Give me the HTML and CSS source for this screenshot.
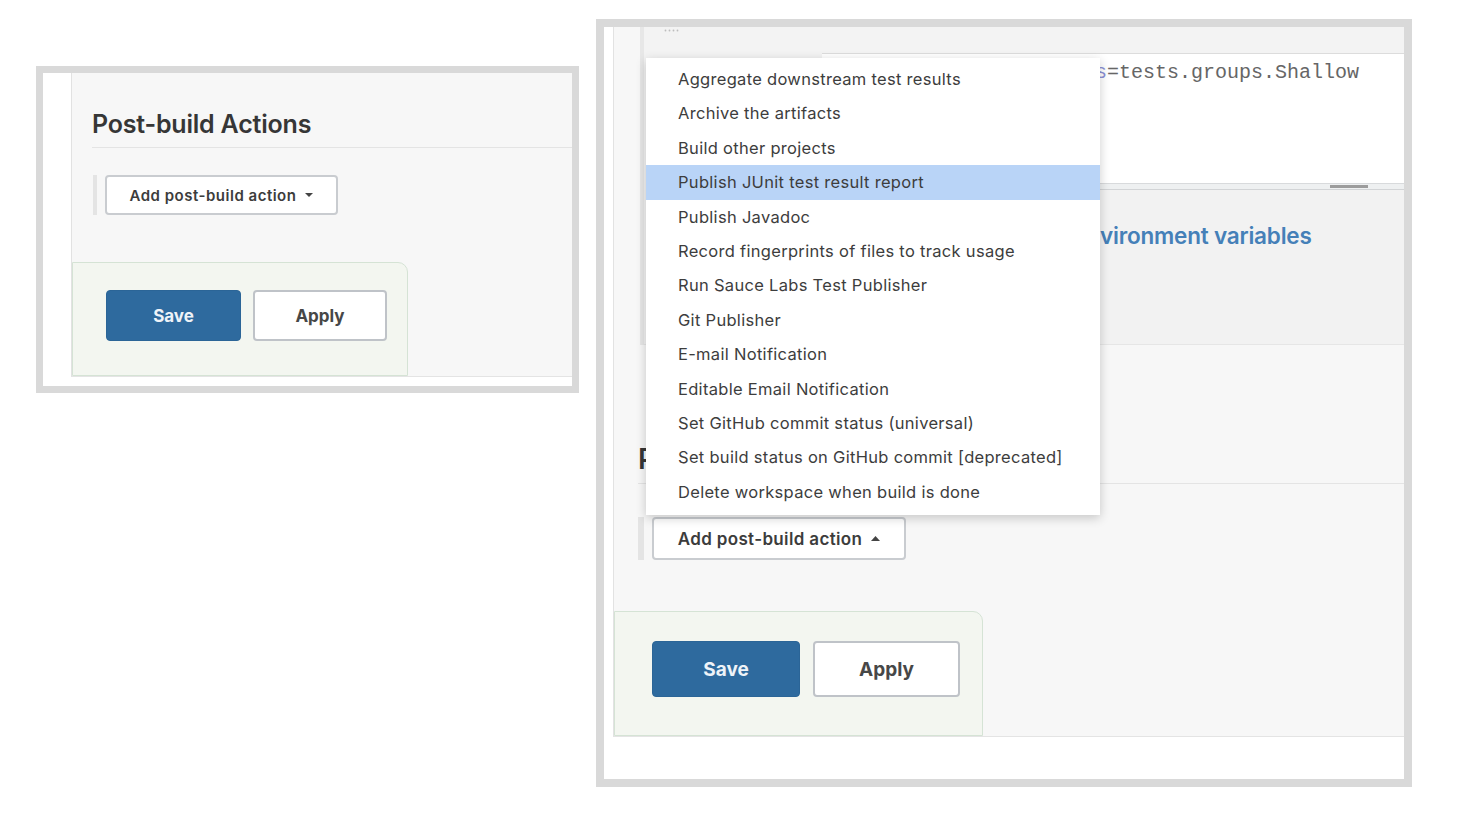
FILE: index.html
```html
<!DOCTYPE html>
<html lang="en">
<head>
<meta charset="utf-8">
<title>Post-build Actions</title>
<link rel="stylesheet" href="styles.css">
</head>
<body>
<div class="stage">
  <section class="shot shot-left">
    <div class="gutter"></div>
    <div class="config config-sm">
      <h2 class="section-title">Post-build Actions</h2>
      <div class="add-row">
        <span class="add-bar"></span>
        <button class="add-btn">Add post-build action <svg class="caret" width="8" height="4" viewBox="0 0 8 4"><path d="M0 0h8L4 4z"/></svg></button>
      </div>
      <div class="sticker">
        <button class="btn btn-save">Save</button>
        <button class="btn btn-apply">Apply</button>
      </div>
    </div>
  </section>

  <section class="shot shot-right">
    <div class="gutter"></div>
    <div class="config config-lg">
      <div class="nested">
        <div class="handle-row"><svg class="dots" width="16" height="3" viewBox="0 0 16 3"><circle cx="1.5" cy="1.5" r="0.9"/><circle cx="5.5" cy="1.5" r="0.9"/><circle cx="9.5" cy="1.5" r="0.9"/><circle cx="13.5" cy="1.5" r="0.9"/></svg></div>
        <div class="textarea"><span class="code">-Dgroup<span class="sel">s</span>=tests.groups.Shallow</span></div>
        <div class="resize-bar"><span class="grip"></span></div>
        <div class="env-row"><span class="env-link">vironment variables</span></div>
      </div>
      <h2 class="section-title">Post-build Actions</h2>
      <div class="add-row">
        <span class="add-bar"></span>
        <button class="add-btn">Add post-build action <svg class="caret" width="9" height="5" viewBox="0 0 9 5"><path d="M0 5h9L4.5 0z"/></svg></button>
      </div>
      <div class="sticker">
        <button class="btn btn-save">Save</button>
        <button class="btn btn-apply">Apply</button>
      </div>
    </div>
    <ul class="menu">
      <li>Aggregate downstream test results</li>
      <li>Archive the artifacts</li>
      <li>Build other projects</li>
      <li class="active">Publish JUnit test result report</li>
      <li>Publish Javadoc</li>
      <li>Record fingerprints of files to track usage</li>
      <li>Run Sauce Labs Test Publisher</li>
      <li>Git Publisher</li>
      <li>E-mail Notification</li>
      <li>Editable Email Notification</li>
      <li>Set GitHub commit status (universal)</li>
      <li>Set build status on GitHub commit [deprecated]</li>
      <li>Delete workspace when build is done</li>
    </ul>
  </section>
</div>
</body>
</html>
```

FILE: styles.css
```css
* { box-sizing: border-box; }

html, body {
  margin: 0;
  padding: 0;
  background: #fff;
}

body {
  width: 1466px;
  height: 820px;
  overflow: hidden;
  font-family: Inter, "Liberation Sans", sans-serif;
  color: #333;
}

.stage {
  display: flex;
  align-items: flex-start;
  padding-left: 36px;
  gap: 17px;
}

.shot {
  display: flex;
  align-items: flex-start;
  background: #fff;
  border: 7px solid #d9d9d9;
}

.shot-left {
  margin-top: 66px;
  width: 543px;
  height: 327px;
}

.shot-right {
  position: relative;
  margin-top: 19px;
  width: 816px;
  height: 768px;
  border-width: 8px;
}

.gutter {
  align-self: stretch;
  background: #fff;
}

.shot-left .gutter { width: 28px; }
.shot-right .gutter { width: 9px; }

.config {
  display: flex;
  flex-direction: column;
  background: #f7f7f7;
  border-left: 1px solid #e2e2e2;
  border-bottom: 1px solid #e4e4e4;
}

.config-sm { width: 501px; height: 304px; }
.config-lg { width: 791px; height: 710px; }

.section-title {
  margin: 0;
  font-weight: 600;
  color: #363636;
  border-bottom: 1px solid #e4e4e4;
  letter-spacing: -0.2px;
  white-space: nowrap;
}

.config-sm .section-title {
  margin-left: 20px;
  padding: 35px 0 7px;
  font-size: 25px;
  line-height: 32px;
}

.config-lg .section-title {
  margin: 97px 0 0 24px;
  padding: 0 0 6px;
  font-size: 28px;
  line-height: 35px;
}

.add-row {
  display: flex;
  align-items: stretch;
}

.config-sm .add-row { margin-top: 27px; padding-left: 21px; }
.config-lg .add-row { margin-top: 33px; padding-left: 24px; }

.add-bar {
  background: #e4e4e4;
  margin-right: 8px;
}

.config-sm .add-bar { width: 4px; }
.config-lg .add-bar { width: 6px; }

.add-btn {
  display: flex;
  align-items: center;
  justify-content: center;
  background: #fff;
  border: 2px solid #c9ccd0;
  border-radius: 4px;
  font-family: Inter, "Liberation Sans", sans-serif;
  font-weight: 600;
  color: #3c3c3c;
  padding: 0;
}

.config-sm .add-btn {
  width: 233px;
  height: 40px;
  font-size: 15px;
  letter-spacing: 0.5px;
  gap: 9px;
}

.config-lg .add-btn {
  width: 254px;
  height: 43px;
  font-size: 17px;
  letter-spacing: 0.35px;
  gap: 9px;
}

.caret { fill: #444; display: block; }

.sticker {
  margin-top: auto;
  display: flex;
  align-items: flex-start;
  background: #f3f6f0;
  border: 1px solid #d5e3d5;
  border-radius: 0 10px 0 0;
}

.config-sm .sticker {
  width: 336px;
  height: 114px;
  padding: 27px 0 0 33px;
  gap: 12px;
}

.config-lg .sticker {
  width: 369px;
  height: 125px;
  padding: 29px 0 0 37px;
  gap: 13px;
}

.btn {
  font-family: Inter, "Liberation Sans", sans-serif;
  font-weight: 700;
  border-radius: 4px;
  padding: 0;
}

.btn-save {
  background: #2e6a9e;
  color: #eef3f8;
  border: 1px solid #2b6597;
}

.btn-apply {
  background: #fff;
  color: #474747;
  border: 2px solid #bfc3c8;
}

.config-sm .btn { height: 51px; font-size: 17px; }
.config-sm .btn-save { width: 135px; }
.config-sm .btn-apply { width: 134px; }

.config-lg .btn { height: 56px; font-size: 19px; }
.config-lg .btn-save { width: 148px; }
.config-lg .btn-apply { width: 147px; }

/* nested block (upper part of right screenshot) */
.nested {
  margin-left: 26px;
  height: 318px;
  background: #f3f3f3;
  border-left: 4px solid #e7e7e7;
  display: flex;
  flex-direction: column;
}

.handle-row {
  height: 26px;
  padding: 2px 0 0 20px;
}

.dots { display: block; fill: #bdbdbd; }

.textarea {
  margin-left: 178px;
  height: 130px;
  background: #fff;
  border-top: 1px solid #dcdcdc;
  padding: 7px 0 0 189px;
  white-space: nowrap;
  overflow: hidden;
}

.code {
  font-family: "Liberation Mono", "DejaVu Sans Mono", monospace;
  font-size: 20px;
  line-height: 24px;
  color: #666;
}

.code .sel { color: #8b90d4; }

.resize-bar {
  margin-left: 178px;
  height: 7px;
  background: #eef0f1;
  border-top: 1px solid #d8dadc;
  border-bottom: 1px solid #d2d4d6;
  display: flex;
  justify-content: flex-end;
  padding-right: 36px;
}

.grip {
  width: 38px;
  height: 3px;
  margin-top: 1px;
  background: #9c9c9c;
}

.env-row {
  flex: 1;
  background: #f2f2f2;
  border-bottom: 1px solid #e6e6e6;
  padding: 31px 0 0 456px;
}

.env-link {
  font-size: 22.5px;
  line-height: 30px;
  font-weight: 600;
  color: #4580b8;
  letter-spacing: -0.2px;
}

/* dropdown menu overlay */
.menu {
  position: absolute;
  left: 42px;
  top: 31px;
  width: 454px;
  height: 457px;
  margin: 0;
  padding: 4px 0 0;
  list-style: none;
  background: #fff;
  box-shadow: 0 3px 10px rgba(0, 0, 0, 0.2);
}

.menu li {
  height: 34.4px;
  line-height: 34.4px;
  padding-left: 32px;
  font-size: 16.5px;
  letter-spacing: 0.3px;
  color: #3d3d3d;
  white-space: nowrap;
}

.menu li.active {
  background: #b9d4f7;
}
```
